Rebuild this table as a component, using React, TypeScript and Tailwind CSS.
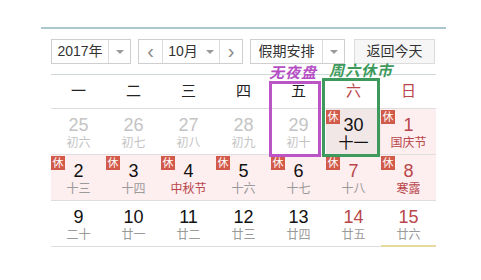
import React from "react";

type Day = {
  n: string;
  lunar: string;
  tone?: "prev" | "red" | "black";
  lunarTone?: "red" | "gray" | "prev" | "today";
  bg?: string;
  rest?: boolean;
  mark?: boolean;
};

const rows: Day[][] = [
  [
    { n: "25", lunar: "初六", tone: "prev", lunarTone: "prev" },
    { n: "26", lunar: "初七", tone: "prev", lunarTone: "prev" },
    { n: "27", lunar: "初八", tone: "prev", lunarTone: "prev" },
    { n: "28", lunar: "初九", tone: "prev", lunarTone: "prev" },
    { n: "29", lunar: "初十", tone: "prev", lunarTone: "prev" },
    { n: "30", lunar: "十一", tone: "black", lunarTone: "today", bg: "bg-[#f1e7e7]", rest: true },
    { n: "1", lunar: "国庆节", tone: "red", lunarTone: "red", bg: "bg-[#fdeeef]", rest: true },
  ],
  [
    { n: "2", lunar: "十三", rest: true },
    { n: "3", lunar: "十四", rest: true },
    { n: "4", lunar: "中秋节", lunarTone: "red", rest: true },
    { n: "5", lunar: "十六", rest: true },
    { n: "6", lunar: "十七", rest: true },
    { n: "7", lunar: "十八", tone: "red", rest: true },
    { n: "8", lunar: "寒露", tone: "red", lunarTone: "red", rest: true },
  ],
  [
    { n: "9", lunar: "二十" },
    { n: "10", lunar: "廿一" },
    { n: "11", lunar: "廿二" },
    { n: "12", lunar: "廿三" },
    { n: "13", lunar: "廿四" },
    { n: "14", lunar: "廿五", tone: "red" },
    { n: "15", lunar: "廿六", tone: "red", mark: true },
  ],
];

const weekdays = ["一", "二", "三", "四", "五", "六", "日"];

const numColor = { prev: "text-[#c4c4c4]", red: "text-[#b9464b]", black: "text-[#111]" };
const lunarColor = {
  prev: "text-[#c4c4c4]",
  red: "text-[#b9464b]",
  gray: "text-[#9a9a9a]",
  today: "text-[#111] text-[15px]",
};

function Arrow() {
  return <span className="h-0 w-0 border-x-[4px] border-t-[4px] border-x-transparent border-t-[#9a9a9a]" />;
}

function Cell({ d }: { d: Day }) {
  return (
    <div
      className={`relative flex h-[46px] flex-col items-center border-b ${
        d.mark ? "border-b-2 border-[#e6d89e]" : "border-[#dedede]"
      } ${d.bg ?? ""}`}
    >
      {d.rest && (
        <span className="absolute left-0 top-[1px] flex h-[14px] w-[14px] items-center justify-center bg-[#d25a4a] text-[11px] leading-none text-white">
          休
        </span>
      )}
      <span className={`mt-[6px] text-[18px] leading-[20px] ${numColor[d.tone ?? "black"]}`}>{d.n}</span>
      <span className={`mt-[1px] text-[12px] leading-[14px] ${lunarColor[d.lunarTone ?? "gray"]}`}>{d.lunar}</span>
    </div>
  );
}

export default function App() {
  return (
    <div
      className="h-[280px] w-[481px] bg-white pl-[41px] pt-[27px] text-[#333]"
      style={{ fontFamily: '"Liberation Sans", "Noto Sans CJK SC", sans-serif' }}
    >
      <div className="relative w-[405px] border-t-2 border-[#a9c7cc] px-[10px]">
        {/* controls */}
        <div className="mt-[10px] flex h-[25px] text-[14px]">
          <div className="flex w-[80px] border border-[#cfcfcf] bg-white">
            <span className="flex w-[56px] items-center justify-center">2017年</span>
            <span className="flex flex-1 items-center justify-center border-l border-[#dcdcdc]">
              <Arrow />
            </span>
          </div>
          <div className="ml-[7px] flex w-[105px] border border-[#cfcfcf] bg-white">
            <span className="flex w-[23px] items-center justify-center pb-[2px] text-[20px] leading-none text-[#888]">‹</span>
            <span className="flex flex-1 items-center justify-center gap-[8px] border-x border-[#dcdcdc]">
              10月
              <Arrow />
            </span>
            <span className="flex w-[22px] items-center justify-center pb-[2px] text-[20px] leading-none text-[#888]">›</span>
          </div>
          <div className="ml-[7px] flex w-[95px] border border-[#cfcfcf] bg-white">
            <span className="flex w-[71px] items-center justify-center">假期安排</span>
            <span className="flex flex-1 items-center justify-center border-l border-[#dcdcdc]">
              <Arrow />
            </span>
          </div>
          <div className="ml-[9px] flex w-[81px] items-center justify-center border border-[#dcdcdc] bg-[#f6f6f6]">
            返回今天
          </div>
        </div>
        <div className="mt-[10px] border-b border-[#cfd9da]" />

        {/* weekday header */}
        <div className="grid grid-cols-7 border-b border-[#dedede]">
          {weekdays.map((w, i) => (
            <div
              key={w}
              className={`flex h-[33px] items-center justify-center text-[15px] ${
                i >= 5 ? "text-[#b9464b]" : "text-[#222]"
              }`}
            >
              {w}
            </div>
          ))}
        </div>

        {rows.map((r, i) => (
          <div key={i} className={`grid grid-cols-7 ${i === 1 ? "bg-[#fdeeef]" : ""}`}>
            {r.map((d) => (
              <Cell key={d.n} d={d} />
            ))}
          </div>
        ))}

        {/* hand-drawn annotations */}
        <div className="pointer-events-none absolute left-[228px] top-[52px] h-[76px] w-[52px] border-[3px] border-[#bb55c6]" />
        <div className="pointer-events-none absolute left-[281px] top-[49px] h-[79px] w-[58px] border-[3px] border-[#3e9a5c]" />
        <span
          className="absolute left-[228px] top-[35px] text-[15px] font-bold italic leading-none tracking-[1px] text-[#b54fc4]"
          style={{ fontFamily: '"Noto Sans CJK SC", serif' }}
        >
          无夜盘
        </span>
        <span
          className="absolute left-[288px] top-[33px] text-[15px] font-bold italic leading-none tracking-[1px] text-[#3e9a5c]"
          style={{ fontFamily: '"Noto Sans CJK SC", serif' }}
        >
          周六休市
        </span>
      </div>
    </div>
  );
}
